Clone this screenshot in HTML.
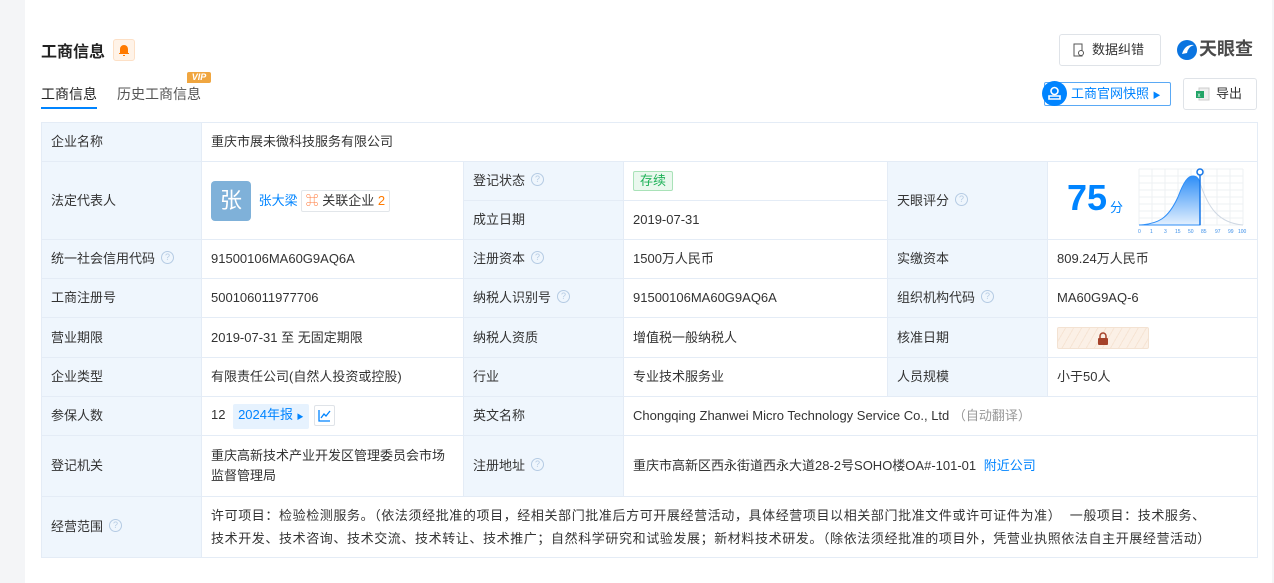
<!DOCTYPE html>
<html><head><meta charset="utf-8"><style>
*{box-sizing:border-box;margin:0;padding:0}
body{width:1274px;height:583px;background:#f4f5f7;font-family:"Liberation Sans","Noto Sans CJK SC",sans-serif;font-size:13px;color:#333;position:relative;overflow:hidden}
.panel{position:absolute;left:25px;top:0;width:1247px;height:583px;background:#fff}
.abs{position:absolute}
table{position:absolute;left:41px;top:122px;border-collapse:collapse;table-layout:fixed;width:1216px}
td{border:1px solid #e4ecf6;padding:0 0 0 9px;vertical-align:middle;line-height:20px}
td.l{background:#eff6fd}
.q{display:inline-block;width:13px;height:13px;border:1px solid #b5cbe3;border-radius:50%;color:#b5cbe3;font-size:9px;line-height:11px;text-align:center;margin-left:6px;vertical-align:middle;position:relative;top:-2px;letter-spacing:0}
.blue{color:#0084ff}
</style></head><body>
<div class="panel"></div>
<div class="abs" style="left:41px;top:38px;font-size:16px;font-weight:bold;color:#222">工商信息</div>
<div class="abs" style="left:113px;top:39px;width:22px;height:22px;background:#fff3e8;border:1px solid #fde0c6;border-radius:3px"><svg width="20" height="20" viewBox="0 0 20 20"><path d="M6 13 L6 9 a4 4 0 0 1 8 0 L14 13 Z M5 13 h10 v1 h-10z M9 15 h2 v1 h-2z" fill="#ff7a00"/></svg></div>
<div class="abs" style="left:41px;top:84px;font-size:14px;color:#222">工商信息</div>
<div class="abs" style="left:41px;top:107px;width:56px;height:2px;background:#0084ff"></div>
<div class="abs" style="left:117px;top:84px;font-size:14px;color:#555">历史工商信息</div>
<div class="abs" style="left:187px;top:72px;width:24px;height:11px;background:#f0a640;border-radius:2px 2px 2px 0;color:#fff;font-size:9px;font-weight:bold;font-style:italic;line-height:11px;text-align:center">VIP</div>
<div class="abs" style="left:1059px;top:34px;width:102px;height:32px;border:1px solid #dfe3e8;border-radius:3px;font-size:13px;line-height:30px;padding-left:32px">数据纠错</div>
<svg class="abs" style="left:1073px;top:43px" width="12" height="14" viewBox="0 0 12 14"><path d="M1 1h8v12h-8z" fill="none" stroke="#555"/><circle cx="8" cy="10" r="2.5" fill="#fff" stroke="#555"/></svg>
<svg class="abs" style="left:1176px;top:39px" width="22" height="22" viewBox="0 0 22 22"><circle cx="11" cy="11" r="10" fill="#0a74e0"/><path d="M6 15 Q9 5 18 6 Q12 8 11 14 Z" fill="#fff"/></svg>
<div class="abs" style="left:1199px;top:38px;font-size:18px;line-height:22px;font-weight:bold;color:#4a4a4a">天眼查</div>
<div class="abs" style="left:1044px;top:82px;width:127px;height:24px;border:1px solid #5aa9f5;border-radius:2px;color:#0084ff;font-size:13px;line-height:22px;padding-left:26px">工商官网快照 <span style="font-size:8px">▶</span></div>
<div class="abs" style="left:1042px;top:81px;width:25px;height:25px;border-radius:50%;background:#0084ff"><svg width="25" height="25" viewBox="0 0 25 25"><circle cx="12.5" cy="10" r="3.5" fill="none" stroke="#fff" stroke-width="1.6"/><path d="M7 18h11v-3h-11z" fill="none" stroke="#fff" stroke-width="1.6"/></svg></div>
<div class="abs" style="left:1183px;top:78px;width:74px;height:32px;border:1px solid #dfe3e8;border-radius:3px;font-size:13px;line-height:30px;padding-left:32px">导出</div>
<svg class="abs" style="left:1196px;top:87px" width="14" height="14" viewBox="0 0 14 14"><rect x="3" y="1" width="10" height="12" fill="#eee" stroke="#ccc"/><rect x="0" y="4" width="8" height="7" fill="#21a366"/><text x="1.5" y="10" font-size="6" fill="#fff" font-family="Liberation Sans">x</text></svg>
<table>
<colgroup><col style="width:160px"><col style="width:262px"><col style="width:160px"><col style="width:264px"><col style="width:160px"><col style="width:210px"></colgroup>
<tr style="height:39px"><td class="l">企业名称</td><td colspan="5">重庆市展未微科技服务有限公司</td></tr>
<tr style="height:39px"><td class="l" rowspan="2">法定代表人</td><td rowspan="2"><span style="display:inline-block;width:40px;height:40px;background:#7fb1d9;border-radius:4px;color:#fff;font-size:22px;line-height:40px;text-align:center;vertical-align:middle">张</span> <span class="blue" style="margin-left:4px;vertical-align:middle">张大梁</span><span style="display:inline-block;border:1px solid #e2e6ea;border-radius:2px;padding:0 4px;margin-left:3px;line-height:20px;vertical-align:middle"><span style="color:#ff7a3c">⌘</span> 关联企业 <span style="color:#ff7a00">2</span></span></td><td class="l">登记状态<span class="q">?</span></td><td><span style="display:inline-block;background:#eaf8ee;border:1px solid #a9e2b8;color:#1eb157;padding:0 6px;line-height:18px;border-radius:2px">存续</span></td><td class="l" rowspan="2">天眼评分<span class="q">?</span></td><td rowspan="2" style="position:relative"><span style="position:absolute;left:19px;top:16px;font-size:36px;font-weight:bold;color:#0084ff;line-height:40px">75</span><span style="position:absolute;left:62px;top:36px;color:#0084ff;font-size:13px">分</span>
<svg style="position:absolute;left:90px;top:5px" width="110" height="70" viewBox="0 0 110 70"><g stroke="#eef0f3" stroke-width="1"><path d="M1 2h104M1 9h104M1 16h104M1 23h104M1 30h104M1 37h104M1 44h104M1 51h104M1 58h104M1 2v56M14 2v56M27 2v56M40 2v56M53 2v56M66 2v56M79 2v56M92 2v56M105 2v56"/></g><defs><linearGradient id="g" x1="0" y1="0" x2="0" y2="1"><stop offset="0" stop-color="#2e8ef7"/><stop offset="1" stop-color="#e3f0fe"/></linearGradient></defs><path d="M1 58 C20 57 30 52 40 30 C46 14 50 9 55 9 C59 9 61 12 62 16 L62 58 Z" fill="url(#g)" stroke="#2e8ef7"/><path d="M62 16 C70 40 80 56 105 58" fill="none" stroke="#cfd8e3"/><path d="M62 6 V58" stroke="#1677e8" stroke-width="1.5"/><circle cx="62" cy="5" r="3" fill="#fff" stroke="#1677e8" stroke-width="1.5"/><g font-size="5" fill="#3b8ee8" font-family="Liberation Sans"><text x="0" y="66">0</text><text x="12" y="66">1</text><text x="26" y="66">3</text><text x="37" y="66">15</text><text x="50" y="66">50</text><text x="63" y="66">85</text><text x="77" y="66">97</text><text x="90" y="66">99</text><text x="100" y="66">100</text></g></svg></td></tr>
<tr style="height:39px"><td class="l">成立日期</td><td>2019-07-31</td></tr>
<tr style="height:39px"><td class="l">统一社会信用代码<span class="q">?</span></td><td>91500106MA60G9AQ6A</td><td class="l">注册资本<span class="q">?</span></td><td>1500万人民币</td><td class="l">实缴资本</td><td>809.24万人民币</td></tr>
<tr style="height:39px"><td class="l">工商注册号</td><td>500106011977706</td><td class="l">纳税人识别号<span class="q">?</span></td><td>91500106MA60G9AQ6A</td><td class="l">组织机构代码<span class="q">?</span></td><td>MA60G9AQ-6</td></tr>
<tr style="height:40px"><td class="l">营业期限</td><td>2019-07-31 至 无固定期限</td><td class="l">纳税人资质</td><td>增值税一般纳税人</td><td class="l">核准日期</td><td><span style="display:inline-block;width:92px;height:22px;background:repeating-linear-gradient(120deg,#fbf0e6 0 6px,#f6e4d4 6px 7px);border:1px solid #f3e2d2;border-radius:2px;text-align:center;vertical-align:middle"><svg width="12" height="14" viewBox="0 0 12 14" style="margin-top:4px"><path d="M3 6V4a3 3 0 0 1 6 0v2" fill="none" stroke="#a5422a" stroke-width="1.5"/><rect x="1" y="6" width="10" height="7" rx="1" fill="#a5422a"/></svg></span></td></tr>
<tr style="height:39px"><td class="l">企业类型</td><td>有限责任公司(自然人投资或控股)</td><td class="l">行业</td><td>专业技术服务业</td><td class="l">人员规模</td><td>小于50人</td></tr>
<tr style="height:39px"><td class="l">参保人数</td><td>12 <span style="display:inline-block;background:#e6f2fe;color:#0084ff;padding:0 5px;line-height:22px;border-radius:2px;margin-left:4px">2024年报 <span style="font-size:7px">▶</span></span><span style="display:inline-block;width:21px;height:21px;border:1px solid #dfe3e8;border-radius:2px;margin-left:5px;vertical-align:middle;text-align:center"><svg width="13" height="13" viewBox="0 0 13 13" style="margin-top:3px"><path d="M1 1v11h11M3 9l3-4 2 2 4-5" fill="none" stroke="#0084ff" stroke-width="1.3"/></svg></span></td><td class="l">英文名称</td><td colspan="3">Chongqing Zhanwei Micro Technology Service Co., Ltd <span style="color:#999">（自动翻译）</span></td></tr>
<tr style="height:61px"><td class="l">登记机关</td><td style="padding-right:8px">重庆高新技术产业开发区管理委员会市场监督管理局</td><td class="l">注册地址<span class="q">?</span></td><td colspan="3">重庆市高新区西永街道西永大道28-2号SOHO楼OA#-101-01 <span class="blue" style="margin-left:4px">附近公司</span></td></tr>
<tr style="height:61px"><td class="l">经营范围<span class="q">?</span></td><td colspan="5" style="line-height:23px;padding-right:4px;letter-spacing:0.6px;white-space:nowrap">许可项目：检验检测服务。（依法须经批准的项目，经相关部门批准后方可开展经营活动，具体经营项目以相关部门批准文件或许可证件为准）&nbsp; 一般项目：技术服务、<br>技术开发、技术咨询、技术交流、技术转让、技术推广；自然科学研究和试验发展；新材料技术研发。（除依法须经批准的项目外，凭营业执照依法自主开展经营活动）</td></tr>
</table>
</body></html>
